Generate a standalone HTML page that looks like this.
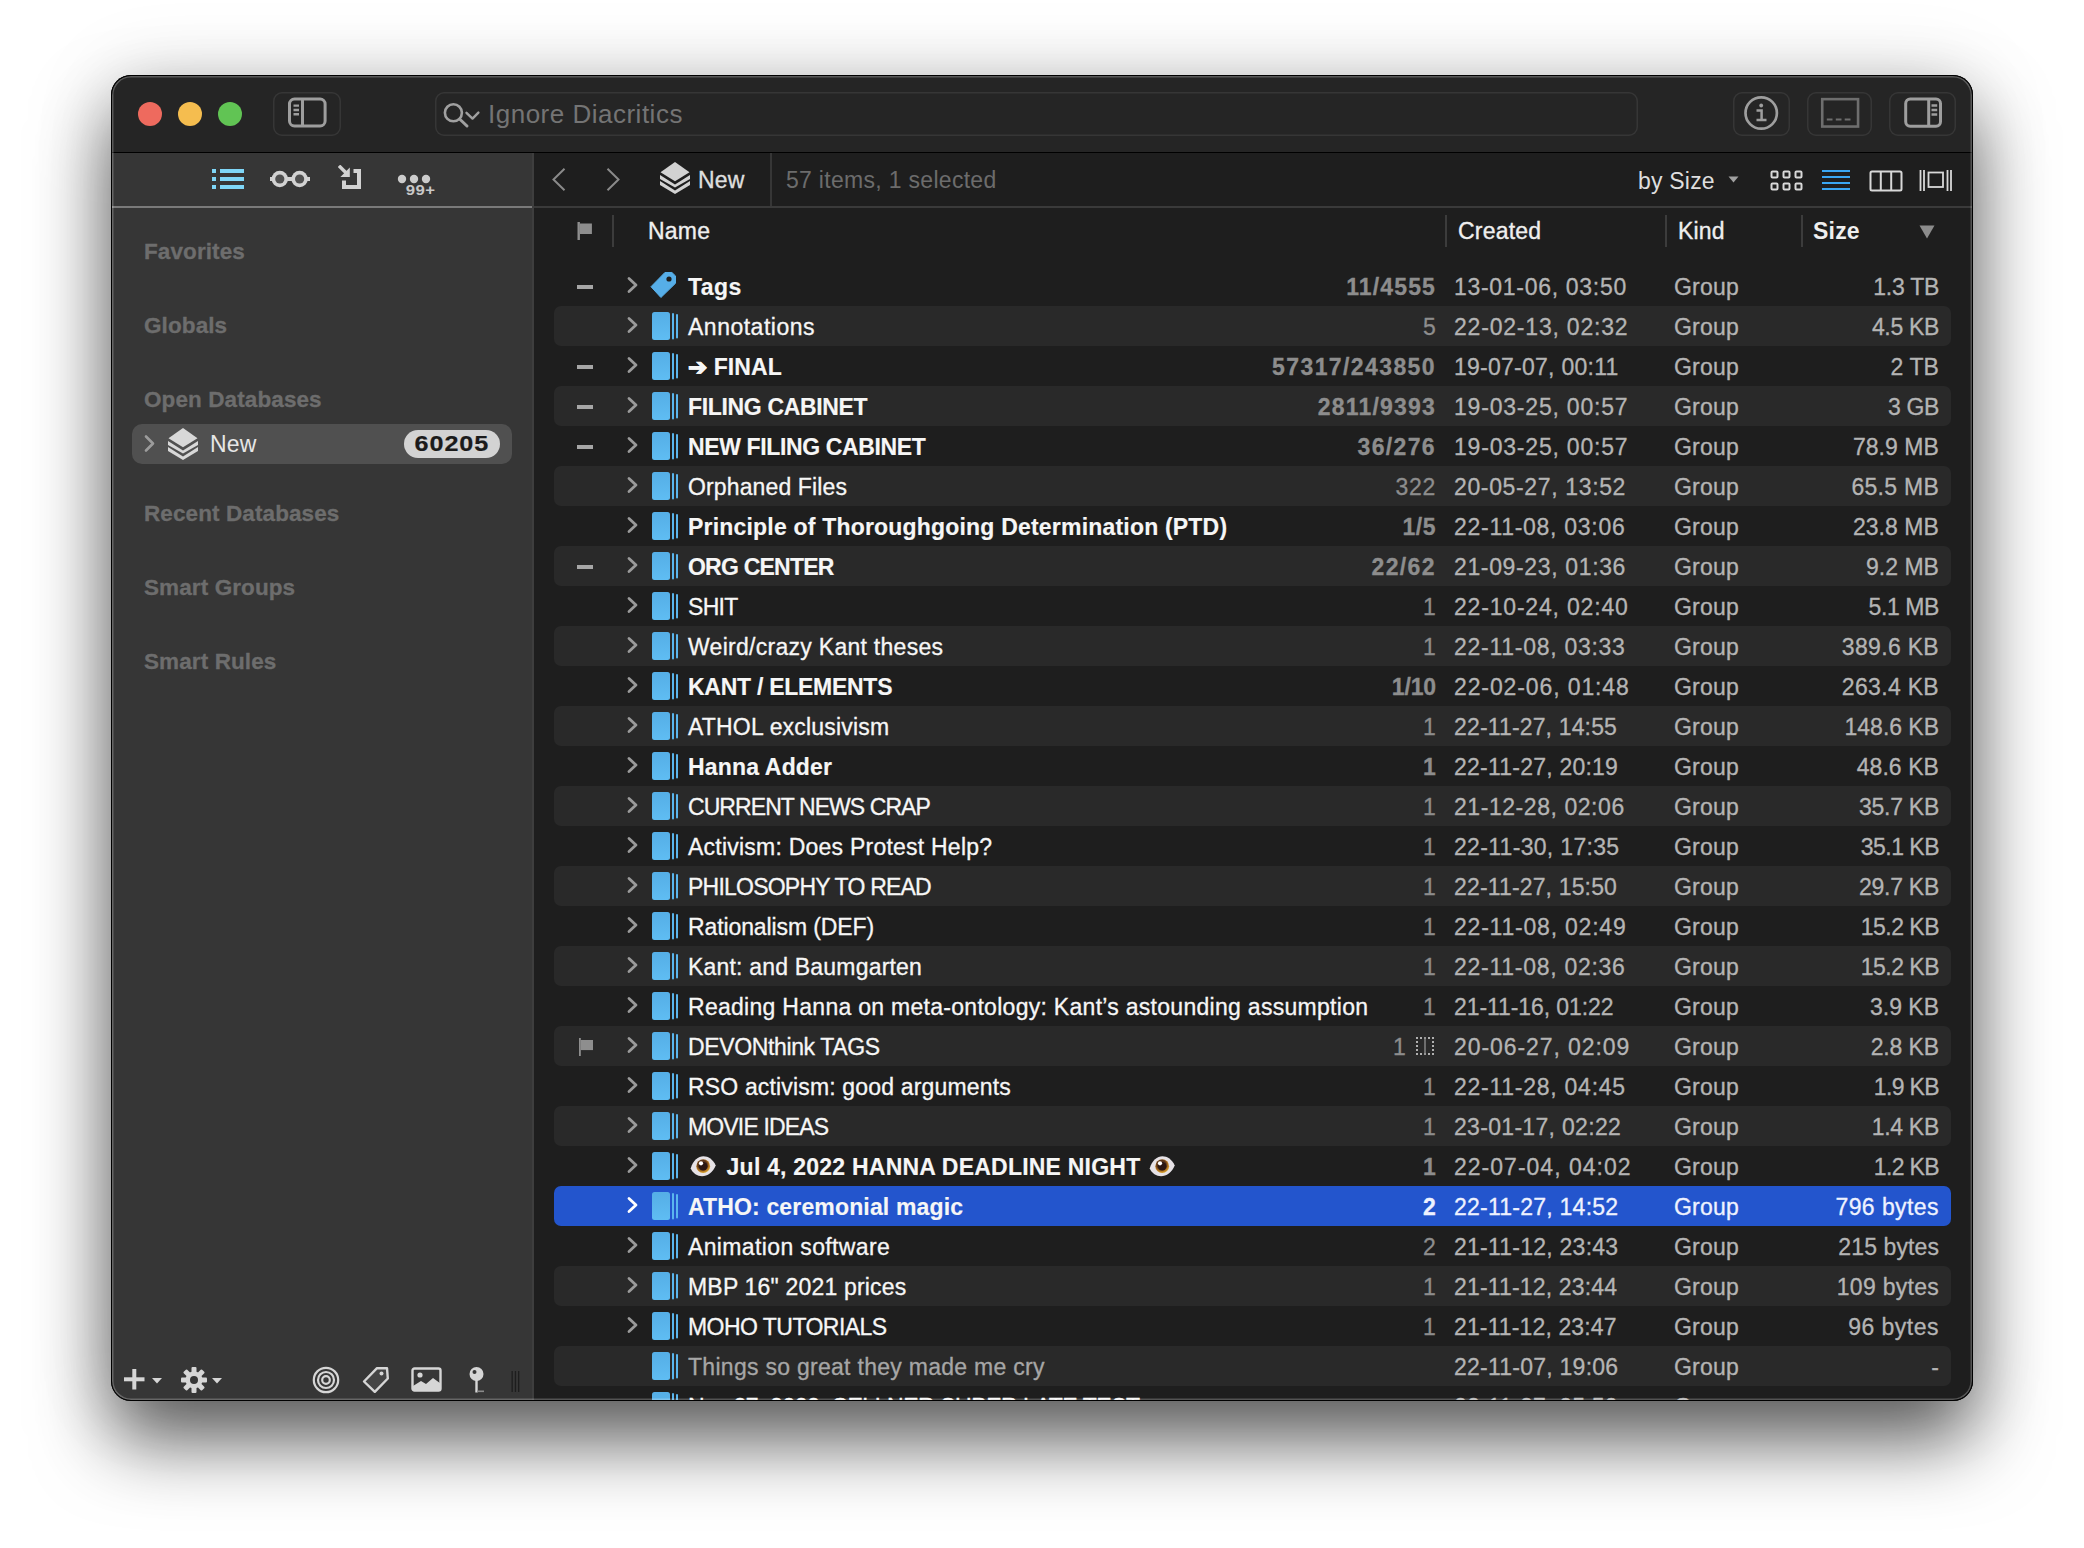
<!DOCTYPE html>
<html><head><meta charset="utf-8">
<style>
html,body{margin:0;padding:0;background:#fff;width:2084px;height:1548px;overflow:hidden;}
body{font-family:"Liberation Sans",sans-serif;position:relative;}
.abs{position:absolute;}
#win{position:absolute;left:111px;top:75px;width:1862px;height:1326px;border-radius:20px;background:#1e1e1e;overflow:hidden;box-shadow:0 40px 76px rgba(0,0,0,0.62),0 0 80px rgba(0,0,0,0.13);}
#frame{position:absolute;left:111px;top:75px;width:1862px;height:1326px;border-radius:20px;box-sizing:border-box;border:1px solid #000;box-shadow:inset 0 0 0 1.5px rgba(255,255,255,0.24);pointer-events:none;z-index:50;}
#title{position:absolute;left:0;top:0;width:1862px;height:77px;background:#252525;}
#tline{position:absolute;left:0;top:77px;width:1862px;height:1px;background:#000;}
.light{position:absolute;top:27px;width:24px;height:24px;border-radius:50%;}
.tbtn{position:absolute;top:17px;height:44px;box-shadow:inset 0 0 0 1.5px #363636;border-radius:9px;}
.tbtn svg{position:absolute;left:0;top:0;}
#search{position:absolute;left:323.5px;top:17px;width:1203px;height:44px;box-shadow:inset 0 0 0 1.5px #363636;border-radius:9px;}
#search svg{position:absolute;left:0;top:0;}
#search .ph{position:absolute;left:53.5px;top:0;line-height:44px;font-size:26px;letter-spacing:0.5px;color:#747474;}
#side{position:absolute;left:0;top:78px;width:423px;height:1248px;background:#363636;}
#sline{position:absolute;left:0;top:53px;width:421px;height:2px;background:#7a7a7a;}
#sedge{position:absolute;left:421px;top:0;width:2px;height:1248px;background:#3e3e3e;}
.sh{position:absolute;left:33px;font-size:22.5px;font-weight:700;color:#6d6d6d;line-height:30px;letter-spacing:0.1px;-webkit-text-stroke-width:0.3px;}
#main{position:absolute;left:423px;top:78px;width:1439px;height:1248px;background:#1e1e1e;}
#mline{position:absolute;left:0;top:53px;width:1439px;height:2px;background:#3a3a3a;}
.hd{position:absolute;top:58px;line-height:40px;font-size:23px;color:#efefef;-webkit-text-stroke-width:0.35px;letter-spacing:0.2px;}
.cdiv{position:absolute;top:62px;width:2px;height:32px;background:#3c3c3c;}
#list{position:absolute;left:0;top:55px;width:1439px;height:1193px;}
.row{position:absolute;left:20px;width:1397px;height:40px;border-radius:7px;font-size:23px;letter-spacing:0.2px;line-height:42px;color:#f6f6f6;white-space:nowrap;}
.row.alt{background:#292929;}
.row.sel{background:#2355cd;}
.row .dash{position:absolute;left:23px;top:19px;width:16px;height:4px;background:#a6a6a6;}
.row .rflag{position:absolute;left:24px;top:12px;}
.row .chev{position:absolute;left:71.5px;top:9.3px;}
.row .fi{position:absolute;left:98px;top:5px;}
.row .tg{position:absolute;left:96px;top:5px;}
.row .nm{position:absolute;left:134px;top:0;-webkit-text-stroke-width:0.3px;}
.row.b .nm{-webkit-text-stroke-width:0.15px;}
.row.dim .nm{-webkit-text-stroke-width:0.3px;}
.row.b .nm{font-weight:700;}
.row .cnt{position:absolute;right:515px;top:0;color:#8d8d8d;-webkit-text-stroke-width:0.3px;}
.row.b .cnt{font-weight:700;}
.row .dots{position:absolute;left:861px;top:10px;}
.row .dt{position:absolute;left:900px;top:0;color:#b4b4b4;-webkit-text-stroke-width:0.3px;}
.row .kd{position:absolute;left:1120px;top:0;color:#b4b4b4;-webkit-text-stroke-width:0.3px;}
.row .sz{position:absolute;right:12px;top:0;color:#b4b4b4;-webkit-text-stroke-width:0.3px;}
.row.sel .cnt,.row.sel .dt,.row.sel .kd,.row.sel .sz{color:#eef2ff;}
.row.dim .nm{color:#a6a6a6;}
.eye{display:inline-block;width:30px;height:24px;vertical-align:-3px;margin:0 2px 0 0;}
.eye svg{display:block;}
</style></head><body>
<div id="win">
  <div id="title">
    <div class="light" style="left:27px;background:#ee6a5e;"></div>
    <div class="light" style="left:67px;background:#f5bd4f;"></div>
    <div class="light" style="left:107px;background:#61c454;"></div>
    <div class="tbtn" style="left:161.5px;width:68px;">
      <svg width="68" height="44" viewBox="0 0 68 44"><rect x="16.5" y="7" width="35.6" height="27" rx="5" fill="none" stroke="#9e9e9e" stroke-width="3"/><line x1="29.5" y1="8" x2="29.5" y2="33" stroke="#9e9e9e" stroke-width="3"/><line x1="20.5" y1="13.6" x2="26" y2="13.6" stroke="#9e9e9e" stroke-width="2.4"/><line x1="20.5" y1="18" x2="26" y2="18" stroke="#9e9e9e" stroke-width="2.4"/><line x1="20.5" y1="22.3" x2="26" y2="22.3" stroke="#9e9e9e" stroke-width="2.4"/></svg>
    </div>
    <div id="search">
      <svg width="60" height="44" viewBox="0 0 60 44"><circle cx="18.4" cy="20.8" r="8.5" fill="none" stroke="#a0a0a0" stroke-width="2.6"/><line x1="24.6" y1="27" x2="32" y2="34" stroke="#a0a0a0" stroke-width="3" stroke-linecap="round"/><path d="M31.5 20.8 L37.5 26.6 L43.4 20.6" fill="none" stroke="#a0a0a0" stroke-width="2.4" stroke-linecap="round" stroke-linejoin="round"/></svg>
      <div class="ph">Ignore Diacritics</div>
    </div>
    <div class="tbtn" style="left:1621.5px;width:57px;">
      <svg width="57" height="44" viewBox="0 0 57 44"><circle cx="28.2" cy="21" r="15.7" fill="none" stroke="#9e9e9e" stroke-width="2.7"/><circle cx="28.2" cy="13.5" r="1.9" fill="#9e9e9e"/><path d="M23.5 18.5 L28.6 18.5 L28.6 28 M23.5 28 L33.5 28" fill="none" stroke="#9e9e9e" stroke-width="2.5"/></svg>
    </div>
    <div class="tbtn" style="left:1695.5px;width:65px;">
      <svg width="65" height="44" viewBox="0 0 65 44"><rect x="15.25" y="7.15" width="35.8" height="27.4" fill="none" stroke="#6e6e6e" stroke-width="2.6"/><g stroke="#6e6e6e" stroke-width="2"><line x1="19.8" y1="27.5" x2="25.5" y2="27.5"/><line x1="28.8" y1="27.5" x2="34.5" y2="27.5"/><line x1="37.7" y1="27.5" x2="43.5" y2="27.5"/></g></svg>
    </div>
    <div class="tbtn" style="left:1777.5px;width:67px;">
      <svg width="67" height="44" viewBox="0 0 67 44"><rect x="16.7" y="7" width="34.8" height="27.3" rx="4.5" fill="none" stroke="#9e9e9e" stroke-width="3"/><line x1="39.7" y1="8" x2="39.7" y2="33" stroke="#9e9e9e" stroke-width="3"/><g stroke="#9e9e9e" stroke-width="2.3"><line x1="42.5" y1="13.5" x2="48.2" y2="13.5"/><line x1="42.5" y1="18" x2="48.2" y2="18"/><line x1="42.5" y1="22.5" x2="48.2" y2="22.5"/></g></svg>
    </div>
  </div>
  <div id="tline"></div>

  <div id="side">
    <svg class="abs" style="left:101px;top:15px" width="34" height="22" viewBox="0 0 34 22"><g fill="#7fd6f7"><rect x="0" y="1" width="4" height="4"/><rect x="8" y="1" width="24" height="4"/><rect x="0" y="9" width="4" height="4"/><rect x="8" y="9" width="24" height="4"/><rect x="0" y="17" width="4" height="4"/><rect x="8" y="17" width="24" height="4"/></g></svg>
    <svg class="abs" style="left:158px;top:16px" width="42" height="20" viewBox="0 0 42 20"><g fill="#d2d2d2"><circle cx="10.8" cy="10" r="8.2"/><circle cx="30.6" cy="10" r="8.2"/><rect x="1" y="8" width="40" height="4"/></g><circle cx="10.8" cy="10" r="4.6" fill="#505050"/><circle cx="30.6" cy="10" r="4.6" fill="#505050"/></svg>
    <svg class="abs" style="left:227px;top:12px" width="26" height="28" viewBox="0 0 26 28"><path d="M15.5 6 L21 6 L21 22 L6 22 L6 15.5" fill="none" stroke="#d2d2d2" stroke-width="4"/><path d="M1 0.8 L8.5 8.3" stroke="#d2d2d2" stroke-width="3.4"/><path d="M11.8 2.6 L11.8 12 L2.4 12 Z" fill="#d2d2d2"/></svg>
    <svg class="abs" style="left:285px;top:16px" width="42" height="32" viewBox="0 0 42 32"><g fill="#cccccc"><circle cx="6" cy="10" r="4.2"/><circle cx="18" cy="10" r="4.2"/><circle cx="30" cy="10" r="4.2"/></g><text x="8.8" y="26.4" font-family="Liberation Sans" font-weight="700" font-size="15.2" fill="#c8c8c8" letter-spacing="0.4" transform="scale(1.1,1)">99+</text></svg>
    <div id="sline"></div><div id="sedge"></div>
    <div class="sh" style="top:84px;">Favorites</div>
    <div class="sh" style="top:158px;">Globals</div>
    <div class="sh" style="top:232px;">Open Databases</div>
    <div class="abs" style="left:21px;top:271px;width:380px;height:40px;border-radius:10px;background:#505050;">
      <svg class="abs" style="left:11px;top:10px" width="14" height="20" viewBox="0 0 14 20"><path d="M3 2.5 L10 9.5 L3 16.5" fill="none" stroke="#9c9c9c" stroke-width="2.6" stroke-linecap="round" stroke-linejoin="round"/></svg>
      <svg class="abs" style="left:36px;top:4px" width="30" height="32" viewBox="0 0 30 32"><g fill="#d8d8d8"><path d="M15 0 L29.5 10.2 L15 19.2 L0.5 10.2 Z"/><path d="M0 13 L15 22.4 L30 13 L30 17.1 L15 25.6 L0 17.1 Z"/><path d="M0 18.9 L15 28.6 L30 18.9 L30 22.9 L15 32 L0 22.9 Z"/></g></svg>
      <div class="abs" style="left:78px;top:0;line-height:40px;font-size:23px;color:#e6e6e6;letter-spacing:0.2px;">New</div>
      <div class="abs" style="left:272px;top:6px;width:96px;height:28px;border-radius:14px;background:#d3d3d3;color:#1b1b1b;font-weight:700;font-size:21.5px;line-height:28px;text-align:center;"><span style="display:inline-block;transform:scaleX(1.17);letter-spacing:0.8px;-webkit-text-stroke-width:0.2px;">60205</span></div>
    </div>
    <div class="sh" style="top:346px;">Recent Databases</div>
    <div class="sh" style="top:420px;">Smart Groups</div>
    <div class="sh" style="top:494px;">Smart Rules</div>

    <svg class="abs" style="left:12.5px;top:1215.5px" width="21" height="21" viewBox="0 0 21 21"><rect x="0" y="8.3" width="20.5" height="4" fill="#d6d6d6"/><rect x="8.3" y="0" width="4" height="20.5" fill="#d6d6d6"/></svg>
    <svg class="abs" style="left:41px;top:1225px" width="11" height="6" viewBox="0 0 11 6"><path d="M0 0 L10 0 L5 5.5 Z" fill="#d6d6d6"/></svg>
    <svg class="abs" style="left:70px;top:1213.5px" width="26" height="26" viewBox="0 0 26 26"><g fill="#d6d6d6"><circle cx="13" cy="13" r="8.5"/><rect x="10.5" y="0" width="5" height="26" rx="1"/><rect x="0" y="10.5" width="26" height="5" rx="1"/><rect x="10.5" y="0" width="5" height="26" rx="1" transform="rotate(45 13 13)"/><rect x="10.5" y="0" width="5" height="26" rx="1" transform="rotate(-45 13 13)"/></g><circle cx="13" cy="13" r="4" fill="#363636"/></svg>
    <svg class="abs" style="left:101px;top:1225px" width="11" height="6" viewBox="0 0 11 6"><path d="M0 0 L10 0 L5 5.5 Z" fill="#d6d6d6"/></svg>
    <svg class="abs" style="left:201px;top:1212.5px" width="28" height="28" viewBox="0 0 28 28"><g fill="none" stroke="#d6d6d6" stroke-width="2.2"><circle cx="14" cy="14" r="12.2"/><circle cx="14" cy="14" r="8"/><circle cx="14" cy="14" r="3.8"/></g></svg>
    <svg class="abs" style="left:251px;top:1213px" width="28" height="28" viewBox="0 0 28 28"><path d="M2 15.5 L15 2.2 L25 2.2 L25.8 12.5 L12.8 25.8 Z" fill="#454545" stroke="#d6d6d6" stroke-width="2.4" stroke-linejoin="round"/><circle cx="19.5" cy="7.5" r="2" fill="#d6d6d6"/></svg>
    <svg class="abs" style="left:299.5px;top:1214px" width="32" height="26" viewBox="0 0 32 26"><rect x="1.5" y="1.5" width="28" height="22" rx="2" fill="none" stroke="#d6d6d6" stroke-width="2.4"/><circle cx="9" cy="8" r="2.6" fill="#d6d6d6"/><path d="M2 23 L2 19 L10 14 L15 17 L22 11 L29.5 16.5 L29.5 23 Z" fill="#d6d6d6"/></svg>
    <svg class="abs" style="left:357px;top:1213px" width="18" height="28" viewBox="0 0 18 28"><circle cx="8.5" cy="8" r="7" fill="#d6d6d6"/><circle cx="6.5" cy="6" r="2" fill="#363636"/><rect x="7.3" y="12" width="2.4" height="14.5" fill="#d6d6d6"/><rect x="9" y="24.5" width="7" height="1.6" fill="#8a8a8a"/></svg>
    <svg class="abs" style="left:400px;top:1218px" width="10" height="22" viewBox="0 0 10 22"><g fill="#1d1d1d"><rect x="0.5" y="0" width="1.3" height="21"/><rect x="3.8" y="0" width="1.3" height="21"/><rect x="7" y="0" width="1.3" height="21"/></g></svg>
  </div>

  <div id="main">
    <svg class="abs" style="left:17px;top:14px" width="18" height="26" viewBox="0 0 18 26"><path d="M13.5 1.8 L2.5 12.5 L13.5 23.2" fill="none" stroke="#8a8a8a" stroke-width="2"/></svg>
    <svg class="abs" style="left:70px;top:14px" width="18" height="26" viewBox="0 0 18 26"><path d="M3.5 1.8 L14.5 12.5 L3.5 23.2" fill="none" stroke="#8a8a8a" stroke-width="2"/></svg>
    <svg class="abs" style="left:126px;top:9px" width="30" height="32" viewBox="0 0 30 32"><g fill="#d2d2d2"><path d="M15 0 L29.5 10.2 L15 19.2 L0.5 10.2 Z"/><path d="M0 13 L15 22.4 L30 13 L30 17.1 L15 25.6 L0 17.1 Z"/><path d="M0 18.9 L15 28.6 L30 18.9 L30 22.9 L15 32 L0 22.9 Z"/></g></svg>
    <div class="abs" style="left:164px;top:1px;line-height:53px;font-size:23px;color:#dedede;letter-spacing:0.2px;-webkit-text-stroke-width:0.35px;">New</div>
    <div class="abs" style="left:236px;top:0;width:2px;height:53px;background:#363636;"></div>
    <div class="abs" style="left:252px;top:1px;line-height:53px;font-size:23px;color:#6c6c6c;letter-spacing:0.3px;">57 items, 1 selected</div>
    <div class="abs" style="left:1104px;top:1.5px;line-height:53px;font-size:23px;color:#dedede;letter-spacing:0.2px;">by Size</div>
    <svg class="abs" style="left:1194px;top:22.5px" width="12" height="8" viewBox="0 0 12 8"><path d="M0.5 0.5 L10.5 0.5 L5.5 6.5 Z" fill="#a0a0a0"/></svg>
    <svg class="abs" style="left:1235.5px;top:16.5px" width="34" height="22" viewBox="0 0 34 22"><g fill="none" stroke="#d8d8d8" stroke-width="2"><rect x="1.5" y="1.5" width="6" height="6" rx="1"/><rect x="13.5" y="1.5" width="6" height="6" rx="1"/><rect x="25.5" y="1.5" width="6" height="6" rx="1"/><rect x="1.5" y="13.5" width="6" height="6" rx="1"/><rect x="13.5" y="13.5" width="6" height="6" rx="1"/><rect x="25.5" y="13.5" width="6" height="6" rx="1"/></g></svg>
    <svg class="abs" style="left:1288px;top:16px" width="30" height="22" viewBox="0 0 30 22"><g fill="#3aa6f2"><rect x="0" y="1" width="28" height="2"/><rect x="0" y="7" width="28" height="2"/><rect x="0" y="13" width="28" height="2"/><rect x="0" y="19" width="28" height="2"/></g></svg>
    <svg class="abs" style="left:1335px;top:16.5px" width="36" height="22" viewBox="0 0 36 22"><g fill="none" stroke="#d8d8d8" stroke-width="2"><rect x="1.5" y="1.5" width="31" height="19" rx="1.5"/><line x1="11.8" y1="2" x2="11.8" y2="20"/><line x1="22.2" y1="2" x2="22.2" y2="20"/></g></svg>
    <svg class="abs" style="left:1385px;top:15.5px" width="36" height="24" viewBox="0 0 36 24"><g fill="none" stroke="#d8d8d8" stroke-width="1.8"><line x1="1.5" y1="1" x2="1.5" y2="22"/><line x1="5" y1="1" x2="5" y2="22"/><rect x="9.5" y="3.5" width="14.5" height="14.5"/><line x1="28.5" y1="1" x2="28.5" y2="22"/><line x1="32" y1="1" x2="32" y2="22"/></g></svg>
    <div id="mline"></div>

    <svg class="abs" style="left:43px;top:69px" width="18" height="20" viewBox="0 0 18 20"><rect x="0.5" y="0" width="2.4" height="18" fill="#8e8e8e"/><rect x="2.9" y="1.5" width="12" height="10.5" fill="#8e8e8e"/></svg>
    <div class="cdiv" style="left:78px;"></div>
    <div class="hd" style="left:114px;">Name</div>
    <div class="cdiv" style="left:910.5px;"></div>
    <div class="hd" style="left:924px;">Created</div>
    <div class="cdiv" style="left:1130.5px;"></div>
    <div class="hd" style="left:1144px;">Kind</div>
    <div class="cdiv" style="left:1266.5px;"></div>
    <div class="hd" style="left:1279px;font-weight:700;-webkit-text-stroke:0;">Size</div>
    <svg class="abs" style="left:1385px;top:72px" width="16" height="14" viewBox="0 0 16 14"><path d="M0.5 0.5 L15.5 0.5 L8 13.5 Z" fill="#8c8c8c"/></svg>

    <div id="list">
<div class="row b" style="top:58px"><span class="dash"></span><svg class="chev" width="14" height="20" viewBox="0 0 14 20"><path d="M3 3.5 L10 10 L3 16.5" fill="none" stroke="#9a9a9a" stroke-width="2.8" stroke-linecap="round" stroke-linejoin="round"/></svg><svg class="tg" width="28" height="28" viewBox="0 0 28 28"><path d="M1 15.7 L14.9 1.5 L21.9 1.5 L25.5 4.9 L25.5 12.3 L10.9 26.5 Z" fill="#56aee8" stroke="#56aee8" stroke-width="1" stroke-linejoin="round"/><circle cx="19" cy="8" r="2.6" fill="#1e1e1e"/></svg><span class="nm" style="letter-spacing:0.400px">Tags</span><span class="cnt" style="letter-spacing:1.133px">11/4555</span><span class="dt" style="letter-spacing:0.700px">13-01-06, 03:50</span><span class="kd">Group</span><span class="sz" style="letter-spacing:-0.280px">1.3 TB</span></div>
<div class="row alt" style="top:98px"><svg class="chev" width="14" height="20" viewBox="0 0 14 20"><path d="M3 3.5 L10 10 L3 16.5" fill="none" stroke="#9a9a9a" stroke-width="2.8" stroke-linecap="round" stroke-linejoin="round"/></svg><svg class="fi" width="28" height="30" viewBox="0 0 28 30"><defs><linearGradient id="fg" x1="0" y1="0" x2="0" y2="1"><stop offset="0" stop-color="#55aee6"/><stop offset="1" stop-color="#5fbdf3"/></linearGradient></defs><rect x="0" y="1" width="18" height="28" rx="2.5" fill="url(#fg)"/><rect x="20" y="2" width="2" height="26.5" rx="1" fill="#5ab6ee"/><rect x="24" y="3" width="2" height="24.5" rx="1" fill="#5ab6ee"/></svg><span class="nm" style="letter-spacing:0.500px">Annotations</span><span class="cnt" style="letter-spacing:0.200px">5</span><span class="dt" style="letter-spacing:0.800px">22-02-13, 02:32</span><span class="kd">Group</span><span class="sz" style="letter-spacing:-0.320px">4.5 KB</span></div>
<div class="row b" style="top:138px"><span class="dash"></span><svg class="chev" width="14" height="20" viewBox="0 0 14 20"><path d="M3 3.5 L10 10 L3 16.5" fill="none" stroke="#9a9a9a" stroke-width="2.8" stroke-linecap="round" stroke-linejoin="round"/></svg><svg class="fi" width="28" height="30" viewBox="0 0 28 30"><defs><linearGradient id="fg" x1="0" y1="0" x2="0" y2="1"><stop offset="0" stop-color="#55aee6"/><stop offset="1" stop-color="#5fbdf3"/></linearGradient></defs><rect x="0" y="1" width="18" height="28" rx="2.5" fill="url(#fg)"/><rect x="20" y="2" width="2" height="26.5" rx="1" fill="#5ab6ee"/><rect x="24" y="3" width="2" height="24.5" rx="1" fill="#5ab6ee"/></svg><span class="nm" style="letter-spacing:0.133px">➔ FINAL</span><span class="cnt" style="letter-spacing:1.400px">57317/243850</span><span class="dt" style="letter-spacing:0.257px">19-07-07, 00:11</span><span class="kd">Group</span><span class="sz" style="letter-spacing:0.067px">2 TB</span></div>
<div class="row alt b" style="top:178px"><span class="dash"></span><svg class="chev" width="14" height="20" viewBox="0 0 14 20"><path d="M3 3.5 L10 10 L3 16.5" fill="none" stroke="#9a9a9a" stroke-width="2.8" stroke-linecap="round" stroke-linejoin="round"/></svg><svg class="fi" width="28" height="30" viewBox="0 0 28 30"><defs><linearGradient id="fg" x1="0" y1="0" x2="0" y2="1"><stop offset="0" stop-color="#55aee6"/><stop offset="1" stop-color="#5fbdf3"/></linearGradient></defs><rect x="0" y="1" width="18" height="28" rx="2.5" fill="url(#fg)"/><rect x="20" y="2" width="2" height="26.5" rx="1" fill="#5ab6ee"/><rect x="24" y="3" width="2" height="24.5" rx="1" fill="#5ab6ee"/></svg><span class="nm" style="letter-spacing:-0.338px">FILING CABINET</span><span class="cnt" style="letter-spacing:1.200px">2811/9393</span><span class="dt" style="letter-spacing:0.800px">19-03-25, 00:57</span><span class="kd">Group</span><span class="sz" style="letter-spacing:-0.333px">3 GB</span></div>
<div class="row b" style="top:218px"><span class="dash"></span><svg class="chev" width="14" height="20" viewBox="0 0 14 20"><path d="M3 3.5 L10 10 L3 16.5" fill="none" stroke="#9a9a9a" stroke-width="2.8" stroke-linecap="round" stroke-linejoin="round"/></svg><svg class="fi" width="28" height="30" viewBox="0 0 28 30"><defs><linearGradient id="fg" x1="0" y1="0" x2="0" y2="1"><stop offset="0" stop-color="#55aee6"/><stop offset="1" stop-color="#5fbdf3"/></linearGradient></defs><rect x="0" y="1" width="18" height="28" rx="2.5" fill="url(#fg)"/><rect x="20" y="2" width="2" height="26.5" rx="1" fill="#5ab6ee"/><rect x="24" y="3" width="2" height="24.5" rx="1" fill="#5ab6ee"/></svg><span class="nm" style="letter-spacing:-0.371px">NEW FILING CABINET</span><span class="cnt" style="letter-spacing:1.360px">36/276</span><span class="dt" style="letter-spacing:0.800px">19-03-25, 00:57</span><span class="kd">Group</span><span class="sz" style="letter-spacing:0.067px">78.9 MB</span></div>
<div class="row alt" style="top:258px"><svg class="chev" width="14" height="20" viewBox="0 0 14 20"><path d="M3 3.5 L10 10 L3 16.5" fill="none" stroke="#9a9a9a" stroke-width="2.8" stroke-linecap="round" stroke-linejoin="round"/></svg><svg class="fi" width="28" height="30" viewBox="0 0 28 30"><defs><linearGradient id="fg" x1="0" y1="0" x2="0" y2="1"><stop offset="0" stop-color="#55aee6"/><stop offset="1" stop-color="#5fbdf3"/></linearGradient></defs><rect x="0" y="1" width="18" height="28" rx="2.5" fill="url(#fg)"/><rect x="20" y="2" width="2" height="26.5" rx="1" fill="#5ab6ee"/><rect x="24" y="3" width="2" height="24.5" rx="1" fill="#5ab6ee"/></svg><span class="nm" style="letter-spacing:0.131px">Orphaned Files</span><span class="cnt" style="letter-spacing:0.700px">322</span><span class="dt" style="letter-spacing:0.643px">20-05-27, 13:52</span><span class="kd">Group</span><span class="sz" style="letter-spacing:0.267px">65.5 MB</span></div>
<div class="row b" style="top:298px"><svg class="chev" width="14" height="20" viewBox="0 0 14 20"><path d="M3 3.5 L10 10 L3 16.5" fill="none" stroke="#9a9a9a" stroke-width="2.8" stroke-linecap="round" stroke-linejoin="round"/></svg><svg class="fi" width="28" height="30" viewBox="0 0 28 30"><defs><linearGradient id="fg" x1="0" y1="0" x2="0" y2="1"><stop offset="0" stop-color="#55aee6"/><stop offset="1" stop-color="#5fbdf3"/></linearGradient></defs><rect x="0" y="1" width="18" height="28" rx="2.5" fill="url(#fg)"/><rect x="20" y="2" width="2" height="26.5" rx="1" fill="#5ab6ee"/><rect x="24" y="3" width="2" height="24.5" rx="1" fill="#5ab6ee"/></svg><span class="nm" style="letter-spacing:0.196px">Principle of Thoroughgoing Determination (PTD)</span><span class="cnt" style="letter-spacing:0.500px">1/5</span><span class="dt" style="letter-spacing:0.714px">22-11-08, 03:06</span><span class="kd">Group</span><span class="sz" style="letter-spacing:0.067px">23.8 MB</span></div>
<div class="row alt b" style="top:338px"><span class="dash"></span><svg class="chev" width="14" height="20" viewBox="0 0 14 20"><path d="M3 3.5 L10 10 L3 16.5" fill="none" stroke="#9a9a9a" stroke-width="2.8" stroke-linecap="round" stroke-linejoin="round"/></svg><svg class="fi" width="28" height="30" viewBox="0 0 28 30"><defs><linearGradient id="fg" x1="0" y1="0" x2="0" y2="1"><stop offset="0" stop-color="#55aee6"/><stop offset="1" stop-color="#5fbdf3"/></linearGradient></defs><rect x="0" y="1" width="18" height="28" rx="2.5" fill="url(#fg)"/><rect x="20" y="2" width="2" height="26.5" rx="1" fill="#5ab6ee"/><rect x="24" y="3" width="2" height="24.5" rx="1" fill="#5ab6ee"/></svg><span class="nm" style="letter-spacing:-0.778px">ORG CENTER</span><span class="cnt" style="letter-spacing:1.400px">22/62</span><span class="dt" style="letter-spacing:0.643px">21-09-23, 01:36</span><span class="kd">Group</span><span class="sz" style="letter-spacing:0.040px">9.2 MB</span></div>
<div class="row" style="top:378px"><svg class="chev" width="14" height="20" viewBox="0 0 14 20"><path d="M3 3.5 L10 10 L3 16.5" fill="none" stroke="#9a9a9a" stroke-width="2.8" stroke-linecap="round" stroke-linejoin="round"/></svg><svg class="fi" width="28" height="30" viewBox="0 0 28 30"><defs><linearGradient id="fg" x1="0" y1="0" x2="0" y2="1"><stop offset="0" stop-color="#55aee6"/><stop offset="1" stop-color="#5fbdf3"/></linearGradient></defs><rect x="0" y="1" width="18" height="28" rx="2.5" fill="url(#fg)"/><rect x="20" y="2" width="2" height="26.5" rx="1" fill="#5ab6ee"/><rect x="24" y="3" width="2" height="24.5" rx="1" fill="#5ab6ee"/></svg><span class="nm" style="letter-spacing:-0.667px">SHIT</span><span class="cnt" style="letter-spacing:0.200px">1</span><span class="dt" style="letter-spacing:0.814px">22-10-24, 02:40</span><span class="kd">Group</span><span class="sz" style="letter-spacing:-0.400px">5.1 MB</span></div>
<div class="row alt" style="top:418px"><svg class="chev" width="14" height="20" viewBox="0 0 14 20"><path d="M3 3.5 L10 10 L3 16.5" fill="none" stroke="#9a9a9a" stroke-width="2.8" stroke-linecap="round" stroke-linejoin="round"/></svg><svg class="fi" width="28" height="30" viewBox="0 0 28 30"><defs><linearGradient id="fg" x1="0" y1="0" x2="0" y2="1"><stop offset="0" stop-color="#55aee6"/><stop offset="1" stop-color="#5fbdf3"/></linearGradient></defs><rect x="0" y="1" width="18" height="28" rx="2.5" fill="url(#fg)"/><rect x="20" y="2" width="2" height="26.5" rx="1" fill="#5ab6ee"/><rect x="24" y="3" width="2" height="24.5" rx="1" fill="#5ab6ee"/></svg><span class="nm" style="letter-spacing:0.282px">Weird/crazy Kant theses</span><span class="cnt" style="letter-spacing:0.200px">1</span><span class="dt" style="letter-spacing:0.729px">22-11-08, 03:33</span><span class="kd">Group</span><span class="sz" style="letter-spacing:0.314px">389.6 KB</span></div>
<div class="row b" style="top:458px"><svg class="chev" width="14" height="20" viewBox="0 0 14 20"><path d="M3 3.5 L10 10 L3 16.5" fill="none" stroke="#9a9a9a" stroke-width="2.8" stroke-linecap="round" stroke-linejoin="round"/></svg><svg class="fi" width="28" height="30" viewBox="0 0 28 30"><defs><linearGradient id="fg" x1="0" y1="0" x2="0" y2="1"><stop offset="0" stop-color="#55aee6"/><stop offset="1" stop-color="#5fbdf3"/></linearGradient></defs><rect x="0" y="1" width="18" height="28" rx="2.5" fill="url(#fg)"/><rect x="20" y="2" width="2" height="26.5" rx="1" fill="#5ab6ee"/><rect x="24" y="3" width="2" height="24.5" rx="1" fill="#5ab6ee"/></svg><span class="nm" style="letter-spacing:-0.271px">KANT / ELEMENTS</span><span class="cnt" style="letter-spacing:-0.133px">1/10</span><span class="dt" style="letter-spacing:0.886px">22-02-06, 01:48</span><span class="kd">Group</span><span class="sz" style="letter-spacing:0.314px">263.4 KB</span></div>
<div class="row alt" style="top:498px"><svg class="chev" width="14" height="20" viewBox="0 0 14 20"><path d="M3 3.5 L10 10 L3 16.5" fill="none" stroke="#9a9a9a" stroke-width="2.8" stroke-linecap="round" stroke-linejoin="round"/></svg><svg class="fi" width="28" height="30" viewBox="0 0 28 30"><defs><linearGradient id="fg" x1="0" y1="0" x2="0" y2="1"><stop offset="0" stop-color="#55aee6"/><stop offset="1" stop-color="#5fbdf3"/></linearGradient></defs><rect x="0" y="1" width="18" height="28" rx="2.5" fill="url(#fg)"/><rect x="20" y="2" width="2" height="26.5" rx="1" fill="#5ab6ee"/><rect x="24" y="3" width="2" height="24.5" rx="1" fill="#5ab6ee"/></svg><span class="nm" style="letter-spacing:0.188px">ATHOL exclusivism</span><span class="cnt" style="letter-spacing:0.200px">1</span><span class="dt" style="letter-spacing:0.157px">22-11-27, 14:55</span><span class="kd">Group</span><span class="sz" style="letter-spacing:-0.029px">148.6 KB</span></div>
<div class="row b" style="top:538px"><svg class="chev" width="14" height="20" viewBox="0 0 14 20"><path d="M3 3.5 L10 10 L3 16.5" fill="none" stroke="#9a9a9a" stroke-width="2.8" stroke-linecap="round" stroke-linejoin="round"/></svg><svg class="fi" width="28" height="30" viewBox="0 0 28 30"><defs><linearGradient id="fg" x1="0" y1="0" x2="0" y2="1"><stop offset="0" stop-color="#55aee6"/><stop offset="1" stop-color="#5fbdf3"/></linearGradient></defs><rect x="0" y="1" width="18" height="28" rx="2.5" fill="url(#fg)"/><rect x="20" y="2" width="2" height="26.5" rx="1" fill="#5ab6ee"/><rect x="24" y="3" width="2" height="24.5" rx="1" fill="#5ab6ee"/></svg><span class="nm" style="letter-spacing:0.170px">Hanna Adder</span><span class="cnt" style="letter-spacing:0.200px">1</span><span class="dt" style="letter-spacing:0.229px">22-11-27, 20:19</span><span class="kd">Group</span><span class="sz" style="letter-spacing:0.067px">48.6 KB</span></div>
<div class="row alt" style="top:578px"><svg class="chev" width="14" height="20" viewBox="0 0 14 20"><path d="M3 3.5 L10 10 L3 16.5" fill="none" stroke="#9a9a9a" stroke-width="2.8" stroke-linecap="round" stroke-linejoin="round"/></svg><svg class="fi" width="28" height="30" viewBox="0 0 28 30"><defs><linearGradient id="fg" x1="0" y1="0" x2="0" y2="1"><stop offset="0" stop-color="#55aee6"/><stop offset="1" stop-color="#5fbdf3"/></linearGradient></defs><rect x="0" y="1" width="18" height="28" rx="2.5" fill="url(#fg)"/><rect x="20" y="2" width="2" height="26.5" rx="1" fill="#5ab6ee"/><rect x="24" y="3" width="2" height="24.5" rx="1" fill="#5ab6ee"/></svg><span class="nm" style="letter-spacing:-0.931px">CURRENT NEWS CRAP</span><span class="cnt" style="letter-spacing:0.200px">1</span><span class="dt" style="letter-spacing:0.557px">21-12-28, 02:06</span><span class="kd">Group</span><span class="sz" style="letter-spacing:-0.267px">35.7 KB</span></div>
<div class="row" style="top:618px"><svg class="chev" width="14" height="20" viewBox="0 0 14 20"><path d="M3 3.5 L10 10 L3 16.5" fill="none" stroke="#9a9a9a" stroke-width="2.8" stroke-linecap="round" stroke-linejoin="round"/></svg><svg class="fi" width="28" height="30" viewBox="0 0 28 30"><defs><linearGradient id="fg" x1="0" y1="0" x2="0" y2="1"><stop offset="0" stop-color="#55aee6"/><stop offset="1" stop-color="#5fbdf3"/></linearGradient></defs><rect x="0" y="1" width="18" height="28" rx="2.5" fill="url(#fg)"/><rect x="20" y="2" width="2" height="26.5" rx="1" fill="#5ab6ee"/><rect x="24" y="3" width="2" height="24.5" rx="1" fill="#5ab6ee"/></svg><span class="nm" style="letter-spacing:0.230px">Activism: Does Protest Help?</span><span class="cnt" style="letter-spacing:0.200px">1</span><span class="dt" style="letter-spacing:0.314px">22-11-30, 17:35</span><span class="kd">Group</span><span class="sz" style="letter-spacing:-0.500px">35.1 KB</span></div>
<div class="row alt" style="top:658px"><svg class="chev" width="14" height="20" viewBox="0 0 14 20"><path d="M3 3.5 L10 10 L3 16.5" fill="none" stroke="#9a9a9a" stroke-width="2.8" stroke-linecap="round" stroke-linejoin="round"/></svg><svg class="fi" width="28" height="30" viewBox="0 0 28 30"><defs><linearGradient id="fg" x1="0" y1="0" x2="0" y2="1"><stop offset="0" stop-color="#55aee6"/><stop offset="1" stop-color="#5fbdf3"/></linearGradient></defs><rect x="0" y="1" width="18" height="28" rx="2.5" fill="url(#fg)"/><rect x="20" y="2" width="2" height="26.5" rx="1" fill="#5ab6ee"/><rect x="24" y="3" width="2" height="24.5" rx="1" fill="#5ab6ee"/></svg><span class="nm" style="letter-spacing:-0.776px">PHILOSOPHY TO READ</span><span class="cnt" style="letter-spacing:0.200px">1</span><span class="dt" style="letter-spacing:0.157px">22-11-27, 15:50</span><span class="kd">Group</span><span class="sz" style="letter-spacing:-0.267px">29.7 KB</span></div>
<div class="row" style="top:698px"><svg class="chev" width="14" height="20" viewBox="0 0 14 20"><path d="M3 3.5 L10 10 L3 16.5" fill="none" stroke="#9a9a9a" stroke-width="2.8" stroke-linecap="round" stroke-linejoin="round"/></svg><svg class="fi" width="28" height="30" viewBox="0 0 28 30"><defs><linearGradient id="fg" x1="0" y1="0" x2="0" y2="1"><stop offset="0" stop-color="#55aee6"/><stop offset="1" stop-color="#5fbdf3"/></linearGradient></defs><rect x="0" y="1" width="18" height="28" rx="2.5" fill="url(#fg)"/><rect x="20" y="2" width="2" height="26.5" rx="1" fill="#5ab6ee"/><rect x="24" y="3" width="2" height="24.5" rx="1" fill="#5ab6ee"/></svg><span class="nm" style="letter-spacing:-0.106px">Rationalism (DEF)</span><span class="cnt" style="letter-spacing:0.200px">1</span><span class="dt" style="letter-spacing:0.786px">22-11-08, 02:49</span><span class="kd">Group</span><span class="sz" style="letter-spacing:-0.500px">15.2 KB</span></div>
<div class="row alt" style="top:738px"><svg class="chev" width="14" height="20" viewBox="0 0 14 20"><path d="M3 3.5 L10 10 L3 16.5" fill="none" stroke="#9a9a9a" stroke-width="2.8" stroke-linecap="round" stroke-linejoin="round"/></svg><svg class="fi" width="28" height="30" viewBox="0 0 28 30"><defs><linearGradient id="fg" x1="0" y1="0" x2="0" y2="1"><stop offset="0" stop-color="#55aee6"/><stop offset="1" stop-color="#5fbdf3"/></linearGradient></defs><rect x="0" y="1" width="18" height="28" rx="2.5" fill="url(#fg)"/><rect x="20" y="2" width="2" height="26.5" rx="1" fill="#5ab6ee"/><rect x="24" y="3" width="2" height="24.5" rx="1" fill="#5ab6ee"/></svg><span class="nm" style="letter-spacing:0.195px">Kant: and Baumgarten</span><span class="cnt" style="letter-spacing:0.200px">1</span><span class="dt" style="letter-spacing:0.729px">22-11-08, 02:36</span><span class="kd">Group</span><span class="sz" style="letter-spacing:-0.500px">15.2 KB</span></div>
<div class="row" style="top:778px"><svg class="chev" width="14" height="20" viewBox="0 0 14 20"><path d="M3 3.5 L10 10 L3 16.5" fill="none" stroke="#9a9a9a" stroke-width="2.8" stroke-linecap="round" stroke-linejoin="round"/></svg><svg class="fi" width="28" height="30" viewBox="0 0 28 30"><defs><linearGradient id="fg" x1="0" y1="0" x2="0" y2="1"><stop offset="0" stop-color="#55aee6"/><stop offset="1" stop-color="#5fbdf3"/></linearGradient></defs><rect x="0" y="1" width="18" height="28" rx="2.5" fill="url(#fg)"/><rect x="20" y="2" width="2" height="26.5" rx="1" fill="#5ab6ee"/><rect x="24" y="3" width="2" height="24.5" rx="1" fill="#5ab6ee"/></svg><span class="nm" style="letter-spacing:0.285px">Reading Hanna on meta-ontology: Kant’s astounding assumption</span><span class="cnt" style="letter-spacing:0.200px">1</span><span class="dt" style="letter-spacing:-0.086px">21-11-16, 01:22</span><span class="kd">Group</span><span class="sz" style="letter-spacing:0.000px">3.9 KB</span></div>
<div class="row alt" style="top:818px"><svg class="rflag" width="16" height="18" viewBox="0 0 16 18"><rect x="1" y="0" width="1.8" height="18" fill="#8e8e8e"/><rect x="2.8" y="2" width="12.2" height="10.1" fill="#8e8e8e"/></svg><svg class="chev" width="14" height="20" viewBox="0 0 14 20"><path d="M3 3.5 L10 10 L3 16.5" fill="none" stroke="#9a9a9a" stroke-width="2.8" stroke-linecap="round" stroke-linejoin="round"/></svg><svg class="fi" width="28" height="30" viewBox="0 0 28 30"><defs><linearGradient id="fg" x1="0" y1="0" x2="0" y2="1"><stop offset="0" stop-color="#55aee6"/><stop offset="1" stop-color="#5fbdf3"/></linearGradient></defs><rect x="0" y="1" width="18" height="28" rx="2.5" fill="url(#fg)"/><rect x="20" y="2" width="2" height="26.5" rx="1" fill="#5ab6ee"/><rect x="24" y="3" width="2" height="24.5" rx="1" fill="#5ab6ee"/></svg><span class="nm" style="letter-spacing:-0.364px">DEVONthink TAGS</span><span class="cnt" style="right:545px">1</span><svg class="dots" width="20" height="20" viewBox="0 0 20 20"><rect x="1" y="1" width="2" height="2" fill="#b0b0b0"/><rect x="1" y="5" width="2" height="2" fill="#b0b0b0"/><rect x="1" y="9" width="2" height="2" fill="#b0b0b0"/><rect x="1" y="13" width="2" height="2" fill="#b0b0b0"/><rect x="1" y="17" width="2" height="2" fill="#b0b0b0"/><rect x="5" y="1" width="2" height="2" fill="#b0b0b0"/><rect x="5" y="17" width="2" height="2" fill="#b0b0b0"/><rect x="9" y="1" width="2" height="2" fill="#b0b0b0"/><rect x="9" y="17" width="2" height="2" fill="#b0b0b0"/><rect x="13" y="1" width="2" height="2" fill="#b0b0b0"/><rect x="13" y="17" width="2" height="2" fill="#b0b0b0"/><rect x="17" y="1" width="2" height="2" fill="#b0b0b0"/><rect x="17" y="5" width="2" height="2" fill="#b0b0b0"/><rect x="17" y="9" width="2" height="2" fill="#b0b0b0"/><rect x="17" y="13" width="2" height="2" fill="#b0b0b0"/><rect x="17" y="17" width="2" height="2" fill="#b0b0b0"/><rect x="9.3" y="1" width="1.4" height="18" fill="#8a8a8a"/></svg><span class="dt" style="letter-spacing:0.914px">20-06-27, 02:09</span><span class="kd">Group</span><span class="sz" style="letter-spacing:-0.120px">2.8 KB</span></div>
<div class="row" style="top:858px"><svg class="chev" width="14" height="20" viewBox="0 0 14 20"><path d="M3 3.5 L10 10 L3 16.5" fill="none" stroke="#9a9a9a" stroke-width="2.8" stroke-linecap="round" stroke-linejoin="round"/></svg><svg class="fi" width="28" height="30" viewBox="0 0 28 30"><defs><linearGradient id="fg" x1="0" y1="0" x2="0" y2="1"><stop offset="0" stop-color="#55aee6"/><stop offset="1" stop-color="#5fbdf3"/></linearGradient></defs><rect x="0" y="1" width="18" height="28" rx="2.5" fill="url(#fg)"/><rect x="20" y="2" width="2" height="26.5" rx="1" fill="#5ab6ee"/><rect x="24" y="3" width="2" height="24.5" rx="1" fill="#5ab6ee"/></svg><span class="nm" style="letter-spacing:0.163px">RSO activism: good arguments</span><span class="cnt" style="letter-spacing:0.200px">1</span><span class="dt" style="letter-spacing:0.743px">22-11-28, 04:45</span><span class="kd">Group</span><span class="sz" style="letter-spacing:-0.640px">1.9 KB</span></div>
<div class="row alt" style="top:898px"><svg class="chev" width="14" height="20" viewBox="0 0 14 20"><path d="M3 3.5 L10 10 L3 16.5" fill="none" stroke="#9a9a9a" stroke-width="2.8" stroke-linecap="round" stroke-linejoin="round"/></svg><svg class="fi" width="28" height="30" viewBox="0 0 28 30"><defs><linearGradient id="fg" x1="0" y1="0" x2="0" y2="1"><stop offset="0" stop-color="#55aee6"/><stop offset="1" stop-color="#5fbdf3"/></linearGradient></defs><rect x="0" y="1" width="18" height="28" rx="2.5" fill="url(#fg)"/><rect x="20" y="2" width="2" height="26.5" rx="1" fill="#5ab6ee"/><rect x="24" y="3" width="2" height="24.5" rx="1" fill="#5ab6ee"/></svg><span class="nm" style="letter-spacing:-0.840px">MOVIE IDEAS</span><span class="cnt" style="letter-spacing:0.200px">1</span><span class="dt" style="letter-spacing:0.314px">23-01-17, 02:22</span><span class="kd">Group</span><span class="sz" style="letter-spacing:-0.280px">1.4 KB</span></div>
<div class="row b" style="top:938px"><svg class="chev" width="14" height="20" viewBox="0 0 14 20"><path d="M3 3.5 L10 10 L3 16.5" fill="none" stroke="#9a9a9a" stroke-width="2.8" stroke-linecap="round" stroke-linejoin="round"/></svg><svg class="fi" width="28" height="30" viewBox="0 0 28 30"><defs><linearGradient id="fg" x1="0" y1="0" x2="0" y2="1"><stop offset="0" stop-color="#55aee6"/><stop offset="1" stop-color="#5fbdf3"/></linearGradient></defs><rect x="0" y="1" width="18" height="28" rx="2.5" fill="url(#fg)"/><rect x="20" y="2" width="2" height="26.5" rx="1" fill="#5ab6ee"/><rect x="24" y="3" width="2" height="24.5" rx="1" fill="#5ab6ee"/></svg><span class="nm" style="letter-spacing:0.218px"><span class="eye"><svg width="30" height="24" viewBox="0 0 30 24"><defs><radialGradient id="ir" cx="0.45" cy="0.4" r="0.6"><stop offset="0.55" stop-color="#5a3418"/><stop offset="0.8" stop-color="#b87a22"/><stop offset="1" stop-color="#d8a830"/></radialGradient></defs><g transform="translate(1.2,0)"><path d="M1.5 14.5 C6 -1.5, 21 -0.9, 26.5 11.5 C21 25.5, 6 24.9, 1.5 14.5 Z" fill="#e6e2e6"/><circle cx="14" cy="12.2" r="6.9" fill="url(#ir)"/><circle cx="14" cy="12.2" r="4.3" fill="#2a1712"/><circle cx="11.8" cy="9.3" r="2.1" fill="#ffffff"/></g></svg></span> Jul 4, 2022 HANNA DEADLINE NIGHT <span class="eye"><svg width="30" height="24" viewBox="0 0 30 24"><defs><radialGradient id="ir" cx="0.45" cy="0.4" r="0.6"><stop offset="0.55" stop-color="#5a3418"/><stop offset="0.8" stop-color="#b87a22"/><stop offset="1" stop-color="#d8a830"/></radialGradient></defs><g transform="translate(1.2,0)"><path d="M1.5 14.5 C6 -1.5, 21 -0.9, 26.5 11.5 C21 25.5, 6 24.9, 1.5 14.5 Z" fill="#e6e2e6"/><circle cx="14" cy="12.2" r="6.9" fill="url(#ir)"/><circle cx="14" cy="12.2" r="4.3" fill="#2a1712"/><circle cx="11.8" cy="9.3" r="2.1" fill="#ffffff"/></g></svg></span></span><span class="cnt" style="letter-spacing:0.200px">1</span><span class="dt" style="letter-spacing:1.014px">22-07-04, 04:02</span><span class="kd">Group</span><span class="sz" style="letter-spacing:-0.640px">1.2 KB</span></div>
<div class="row alt sel b" style="top:978px"><svg class="chev" width="14" height="20" viewBox="0 0 14 20"><path d="M3 3.5 L10 10 L3 16.5" fill="none" stroke="#ffffff" stroke-width="2.8" stroke-linecap="round" stroke-linejoin="round"/></svg><svg class="fi" width="28" height="30" viewBox="0 0 28 30"><defs><linearGradient id="fg" x1="0" y1="0" x2="0" y2="1"><stop offset="0" stop-color="#55aee6"/><stop offset="1" stop-color="#5fbdf3"/></linearGradient></defs><rect x="0" y="1" width="18" height="28" rx="2.5" fill="url(#fg)"/><rect x="20" y="2" width="2" height="26.5" rx="1" fill="#5ab6ee"/><rect x="24" y="3" width="2" height="24.5" rx="1" fill="#5ab6ee"/></svg><span class="nm" style="letter-spacing:0.152px">ATHO: ceremonial magic</span><span class="cnt" style="letter-spacing:0.200px">2</span><span class="dt" style="letter-spacing:0.243px">22-11-27, 14:52</span><span class="kd">Group</span><span class="sz" style="letter-spacing:0.425px">796 bytes</span></div>
<div class="row" style="top:1018px"><svg class="chev" width="14" height="20" viewBox="0 0 14 20"><path d="M3 3.5 L10 10 L3 16.5" fill="none" stroke="#9a9a9a" stroke-width="2.8" stroke-linecap="round" stroke-linejoin="round"/></svg><svg class="fi" width="28" height="30" viewBox="0 0 28 30"><defs><linearGradient id="fg" x1="0" y1="0" x2="0" y2="1"><stop offset="0" stop-color="#55aee6"/><stop offset="1" stop-color="#5fbdf3"/></linearGradient></defs><rect x="0" y="1" width="18" height="28" rx="2.5" fill="url(#fg)"/><rect x="20" y="2" width="2" height="26.5" rx="1" fill="#5ab6ee"/><rect x="24" y="3" width="2" height="24.5" rx="1" fill="#5ab6ee"/></svg><span class="nm" style="letter-spacing:0.365px">Animation software</span><span class="cnt" style="letter-spacing:0.200px">2</span><span class="dt" style="letter-spacing:0.243px">21-11-12, 23:43</span><span class="kd">Group</span><span class="sz" style="letter-spacing:0.100px">215 bytes</span></div>
<div class="row alt" style="top:1058px"><svg class="chev" width="14" height="20" viewBox="0 0 14 20"><path d="M3 3.5 L10 10 L3 16.5" fill="none" stroke="#9a9a9a" stroke-width="2.8" stroke-linecap="round" stroke-linejoin="round"/></svg><svg class="fi" width="28" height="30" viewBox="0 0 28 30"><defs><linearGradient id="fg" x1="0" y1="0" x2="0" y2="1"><stop offset="0" stop-color="#55aee6"/><stop offset="1" stop-color="#5fbdf3"/></linearGradient></defs><rect x="0" y="1" width="18" height="28" rx="2.5" fill="url(#fg)"/><rect x="20" y="2" width="2" height="26.5" rx="1" fill="#5ab6ee"/><rect x="24" y="3" width="2" height="24.5" rx="1" fill="#5ab6ee"/></svg><span class="nm" style="letter-spacing:0.189px">MBP 16&quot; 2021 prices</span><span class="cnt" style="letter-spacing:0.200px">1</span><span class="dt" style="letter-spacing:0.171px">21-11-12, 23:44</span><span class="kd">Group</span><span class="sz" style="letter-spacing:0.275px">109 bytes</span></div>
<div class="row" style="top:1098px"><svg class="chev" width="14" height="20" viewBox="0 0 14 20"><path d="M3 3.5 L10 10 L3 16.5" fill="none" stroke="#9a9a9a" stroke-width="2.8" stroke-linecap="round" stroke-linejoin="round"/></svg><svg class="fi" width="28" height="30" viewBox="0 0 28 30"><defs><linearGradient id="fg" x1="0" y1="0" x2="0" y2="1"><stop offset="0" stop-color="#55aee6"/><stop offset="1" stop-color="#5fbdf3"/></linearGradient></defs><rect x="0" y="1" width="18" height="28" rx="2.5" fill="url(#fg)"/><rect x="20" y="2" width="2" height="26.5" rx="1" fill="#5ab6ee"/><rect x="24" y="3" width="2" height="24.5" rx="1" fill="#5ab6ee"/></svg><span class="nm" style="letter-spacing:-0.538px">MOHO TUTORIALS</span><span class="cnt" style="letter-spacing:0.200px">1</span><span class="dt" style="letter-spacing:0.129px">21-11-12, 23:47</span><span class="kd">Group</span><span class="sz" style="letter-spacing:0.486px">96 bytes</span></div>
<div class="row alt dim" style="top:1138px"><svg class="fi" width="28" height="30" viewBox="0 0 28 30"><defs><linearGradient id="fg" x1="0" y1="0" x2="0" y2="1"><stop offset="0" stop-color="#55aee6"/><stop offset="1" stop-color="#5fbdf3"/></linearGradient></defs><rect x="0" y="1" width="18" height="28" rx="2.5" fill="url(#fg)"/><rect x="20" y="2" width="2" height="26.5" rx="1" fill="#5ab6ee"/><rect x="24" y="3" width="2" height="24.5" rx="1" fill="#5ab6ee"/></svg><span class="nm" style="letter-spacing:0.284px">Things so great they made me cry</span><span class="dt" style="letter-spacing:0.243px">22-11-07, 19:06</span><span class="kd">Group</span><span class="sz" style="letter-spacing:0.200px">-</span></div>
<div class="row" style="top:1178px"><svg class="fi" width="28" height="30" viewBox="0 0 28 30"><defs><linearGradient id="fg" x1="0" y1="0" x2="0" y2="1"><stop offset="0" stop-color="#55aee6"/><stop offset="1" stop-color="#5fbdf3"/></linearGradient></defs><rect x="0" y="1" width="18" height="28" rx="2.5" fill="url(#fg)"/><rect x="20" y="2" width="2" height="26.5" rx="1" fill="#5ab6ee"/><rect x="24" y="3" width="2" height="24.5" rx="1" fill="#5ab6ee"/></svg><span class="nm" style="letter-spacing:-0.450px">Nov 27, 2022: CELLNER SUPER LATE TEST</span><span class="dt" style="letter-spacing:0.200px">22-11-27, 05:50</span><span class="kd">Group</span><span class="sz" style="letter-spacing:0.200px"></span></div>
    </div>
  </div>
</div>
<div id="frame"></div>
</body></html>
